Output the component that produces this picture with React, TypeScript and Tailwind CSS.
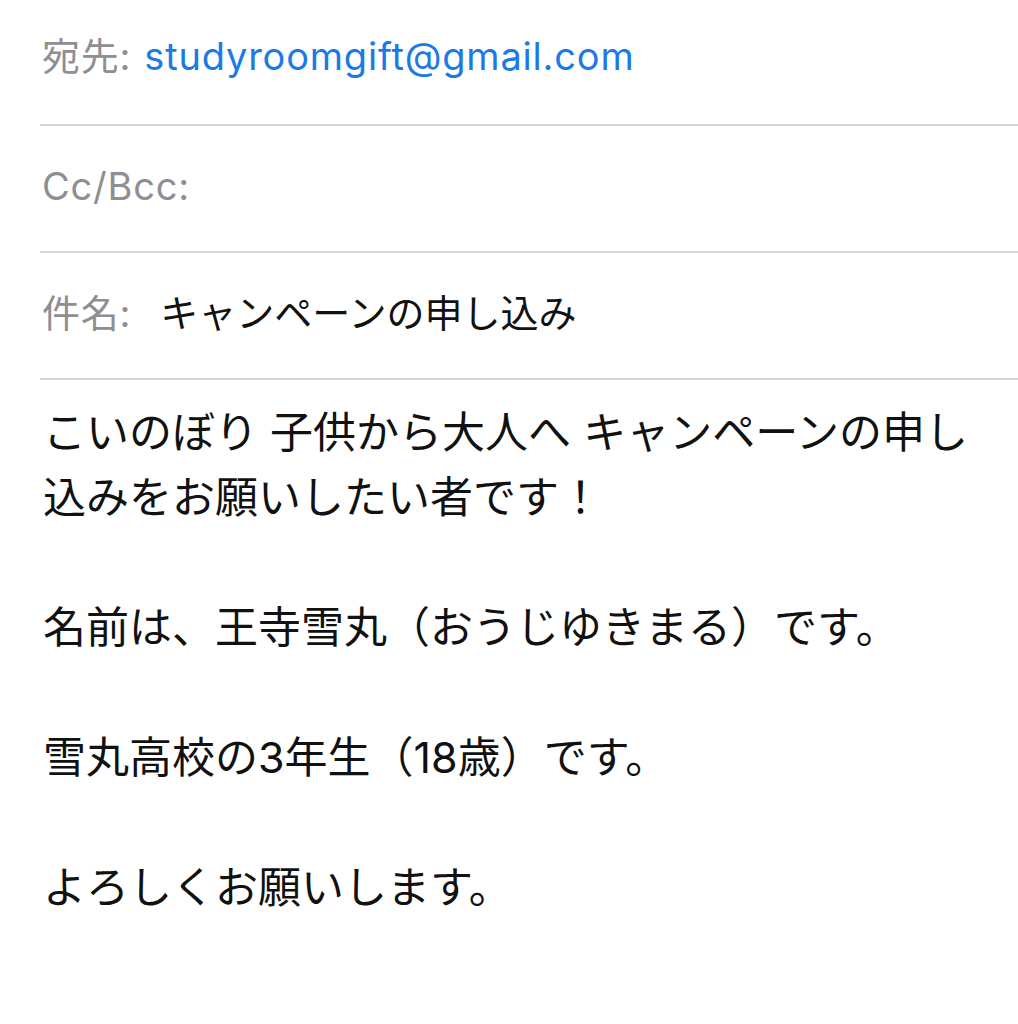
const latin = "font-['Inter','Noto_Sans_CJK_JP',sans-serif]";

const body = [
  "こいのぼり 子供から大人へ キャンペーンの申し",
  "込みをお願いしたい者です！",
  "",
  "名前は、王寺雪丸（おうじゆきまる）です。",
  "",
  "雪丸高校の3年生（18歳）です。",
  "",
  "よろしくお願いします。",
];

function HeaderRow({ label, value, valueClass, first }: { label: string; value?: string; valueClass?: string; first?: boolean }) {
  return (
    <div className={`ml-[40px] flex items-center border-b-2 border-[#d5d5d5] ${first ? "h-[126px] pb-[12px]" : "h-[127px] pb-[4px]"}`}>
      <span className="pl-[2px] text-[38px] tracking-[0.8px] text-[#8e8e93]">{label}</span>
      {value && <span className={valueClass}>{value}</span>}
    </div>
  );
}

export default function App() {
  return (
    <div className={`min-h-screen w-[1018px] bg-white ${latin}`}>
      <HeaderRow
        first
        label="宛先:"
        value="studyroomgift@gmail.com"
        valueClass="ml-[13px] text-[38px] tracking-[0.8px] text-[#1b7ae6]"
      />
      <HeaderRow label="Cc/Bcc:" />
      <HeaderRow
        label="件名:"
        value="キャンペーンの申し込み"
        valueClass="ml-[29px] text-[38px] text-[#111]"
      />
      <div className="pl-[43px] pt-[20px] text-[43px] leading-[65px] text-[#111]">
        {body.map((line, i) => (
          <div key={i} className="h-[65px] whitespace-nowrap">
            {line || "\u00a0"}
          </div>
        ))}
      </div>
    </div>
  );
}
